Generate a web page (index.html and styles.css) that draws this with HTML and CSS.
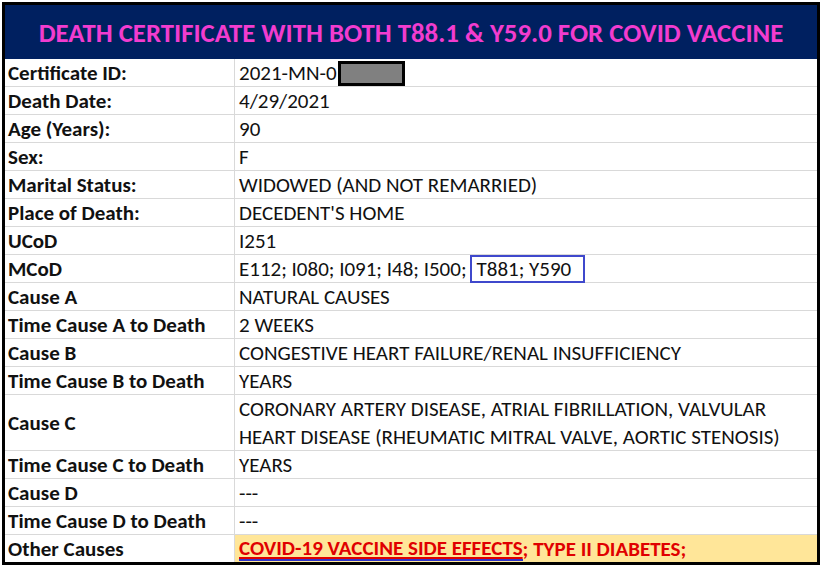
FILE: index.html
```html
<!DOCTYPE html>
<html>
<head>
<meta charset="utf-8">
<link rel="stylesheet" href="styles.css">
</head>
<body>
<div class="page">
  <div class="sheet">
    <div class="title">DEATH CERTIFICATE WITH BOTH T88.1 &amp; Y59.0 FOR COVID VACCINE</div>
    <div class="grid">
      <div class="lbl">Certificate ID:</div><div class="val">2021-MN-0<span class="redact"></span></div>
      <div class="lbl">Death Date:</div><div class="val">4/29/2021</div>
      <div class="lbl">Age (Years):</div><div class="val">90</div>
      <div class="lbl">Sex:</div><div class="val">F</div>
      <div class="lbl">Marital Status:</div><div class="val">WIDOWED (AND NOT REMARRIED)</div>
      <div class="lbl">Place of Death:</div><div class="val">DECEDENT'S HOME</div>
      <div class="lbl">UCoD</div><div class="val">I251</div>
      <div class="lbl">MCoD</div><div class="val">E112; I080; I091; I48; I500;<span class="boxed">T881; Y590</span></div>
      <div class="lbl">Cause A</div><div class="val">NATURAL CAUSES</div>
      <div class="lbl">Time Cause A to Death</div><div class="val">2 WEEKS</div>
      <div class="lbl">Cause B</div><div class="val">CONGESTIVE HEART FAILURE/RENAL INSUFFICIENCY</div>
      <div class="lbl">Time Cause B to Death</div><div class="val">YEARS</div>
      <div class="lbl tall">Cause C</div><div class="val tall">CORONARY ARTERY DISEASE, ATRIAL FIBRILLATION, VALVULAR<br>HEART DISEASE (RHEUMATIC MITRAL VALVE, AORTIC STENOSIS)</div>
      <div class="lbl">Time Cause C to Death</div><div class="val">YEARS</div>
      <div class="lbl">Cause D</div><div class="val">---</div>
      <div class="lbl">Time Cause D to Death</div><div class="val">---</div>
      <div class="lbl last">Other Causes</div><div class="val last other"><span class="ul">COVID-19 VACCINE SIDE EFFECTS</span>; TYPE II DIABETES;</div>
    </div>
  </div>
</div>
</body>
</html>
```
FILE: styles.css
```css
html, body {
  margin: 0;
  padding: 0;
  background: #ffffff;
}
.page {
  padding: 2px 0 0 2px;
  font-family: Carlito, Lato, "Liberation Sans", sans-serif;
  font-size: 21px;
  color: #111;
}
.sheet {
  width: 812px;
  border: 3px solid #000;
  background: #fff;
}
.title {
  height: 54px;
  background: #002060;
  color: #f23ccf;
  font-weight: bold;
  font-size: 26.8px;
  display: flex;
  align-items: center;
  justify-content: center;
}
.grid {
  display: grid;
  grid-template-columns: 230px 1fr;
}
.lbl, .val {
  height: 26px;
  padding-top: 1px;
  border-bottom: 1px solid #d9d9d9;
  display: flex;
  align-items: center;
  white-space: nowrap;
}
.lbl {
  font-weight: bold;
  padding-left: 3px;
  border-right: 1px solid #d9d9d9;
}
.val {
  padding-left: 4px;
}
.tall {
  height: 54px;
  line-height: 28px;
}
.last {
  border-bottom: none;
}
.redact {
  display: inline-block;
  width: 61px;
  height: 19px;
  background: #808080;
  border: 3px solid #000;
  margin-left: 1px;
}
.boxed {
  display: inline-block;
  border: 2px solid #3f48cc;
  padding: 0 12px 0 5px;
  height: 24px;
  line-height: 24px;
  margin-left: 3px;
}
.other {
  background: #ffe699;
  color: #e00000;
  font-weight: bold;
}
.ul {
  text-decoration: underline;
  text-decoration-color: #e00000;
  border-bottom: 2px solid #3035c8;
  line-height: 22px;
}
```
